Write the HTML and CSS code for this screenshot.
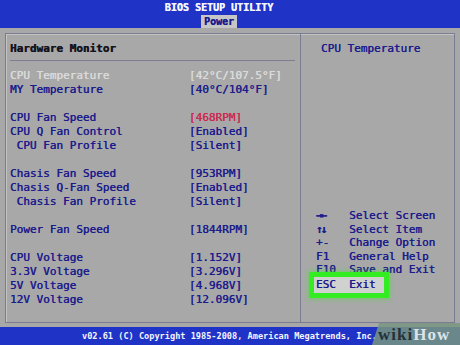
FILE: index.html
```html
<!DOCTYPE html>
<html lang="en">
<head>
    <meta charset="UTF-8">
    <title>BIOS Setup Utility - Power</title>
    <link rel="stylesheet" href="styles.css">
</head>
<body>
    <div class="screen">
        <!-- Barra superior -->
        <header class="topbar">
            <div class="title">BIOS SETUP UTILITY</div>
            <div class="tabs"><span class="tab">Power</span></div>
        </header>

        <!-- Quadro principal -->
        <main class="frame">
            <section class="panel left">
                <h1 class="panel-title">Hardware Monitor</h1>
                <div class="rows">
                    <div class="row disabled"><span>CPU Temperature</span><span>[42°C/107.5°F]</span></div>
                    <div class="row"><span>MY Temperature</span><span>[40°C/104°F]</span></div>
                    <div class="row blank"></div>
                    <div class="row"><span>CPU Fan Speed</span><span class="alert">[468RPM]</span></div>
                    <div class="row"><span>CPU Q Fan Control</span><span>[Enabled]</span></div>
                    <div class="row sub"><span>CPU Fan Profile</span><span>[Silent]</span></div>
                    <div class="row blank"></div>
                    <div class="row"><span>Chasis Fan Speed</span><span>[953RPM]</span></div>
                    <div class="row"><span>Chasis Q-Fan Speed</span><span>[Enabled]</span></div>
                    <div class="row sub"><span>Chasis Fan Profile</span><span>[Silent]</span></div>
                    <div class="row blank"></div>
                    <div class="row"><span>Power Fan Speed</span><span>[1844RPM]</span></div>
                    <div class="row blank"></div>
                    <div class="row"><span>CPU Voltage</span><span>[1.152V]</span></div>
                    <div class="row"><span>3.3V Voltage</span><span>[3.296V]</span></div>
                    <div class="row"><span>5V Voltage</span><span>[4.968V]</span></div>
                    <div class="row"><span>12V Voltage</span><span>[12.096V]</span></div>
                </div>
            </section>

            <aside class="panel right">
                <div class="help-title">CPU Temperature</div>
                <div class="keys">
                    <div class="key"><span class="k arrows">→←</span><span>Select Screen</span></div>
                    <div class="key"><span class="k arrows">↑↓</span><span>Select Item</span></div>
                    <div class="key"><span class="k">+-</span><span>Change Option</span></div>
                    <div class="key"><span class="k">F1</span><span>General Help</span></div>
                    <div class="key"><span class="k">F10</span><span>Save and Exit</span></div>
                    <div class="key"><span class="hl"><span class="k">ESC</span><span>Exit</span></span></div>
                </div>
            </aside>
        </main>

        <!-- Rodapé -->
        <footer class="bottombar">v02.61 (C) Copyright 1985-2008, American Megatrends, Inc.</footer>

        <div class="watermark"><span class="wiki">wiki</span><span class="how">How</span></div>
    </div>
</body>
</html>
```

FILE: styles.css
```css
/* Estilos gerais */
body, html {
    margin: 0;
    padding: 0;
    background-color: #a8a8a8;
}

.screen {
    position: relative;
    width: 460px;
    height: 345px;
    overflow: hidden;
    display: flex;
    flex-direction: column;
    background-color: #a8a8a8;
    font-family: "DejaVu Sans Mono", "Liberation Mono", monospace;
    font-size: 11px;
    color: #1c1c8c;
    text-shadow: 0.3px 0 0 currentColor;
}

/* Barra superior */
.topbar {
    height: 28px;
    background-color: #1f33c6;
    padding-right: 22px;
    display: flex;
    flex-direction: column;
    align-items: center;
}
.title {
    height: 15px;
    line-height: 16px;
    font-size: 10px;
    font-weight: bold;
    color: #f4f4ff;
}
.tabs {
    height: 13px;
}
.tab {
    display: inline-block;
    height: 13px;
    line-height: 13px;
    padding: 0 3px;
    font-size: 10px;
    font-weight: bold;
    background-color: #c6c6c6;
    color: #1c1c8c;
}

/* Quadro principal */
.frame {
    flex: 1;
    margin: 5px 5px 4px 5px;
    display: flex;
    border: 1px solid #7a7c92;
    box-shadow: inset 1px 1px 0 #c4c4c4;
}
.panel {
    display: flex;
    flex-direction: column;
}
.left {
    width: 290px;
    padding-left: 4px;
    border-right: 1px solid #7a7c92;
}
.right {
    flex: 1;
}

.panel-title {
    margin: 0 5px 0 0;
    padding: 8px 0 4px 0;
    font-size: 11px;
    line-height: 14px;
    font-weight: bold;
    color: #141420;
    border-bottom: 1px solid #7c7e90;
}
.rows {
    margin-top: 8px;
}
.row {
    display: grid;
    grid-template-columns: 179px auto;
    height: 14px;
    line-height: 14px;
    white-space: pre;
}
.row.sub span:first-child {
    padding-left: 1ch;
}
.row.disabled {
    color: #dadada;
}
.alert {
    color: #cc2a52;
}

/* Painel de ajuda */
.help-title {
    padding: 8px 0 0 20px;
    line-height: 14px;
    color: #1c1c8c;
}
.keys {
    margin-top: auto;
    padding: 0 0 32px 15px;
}
.key {
    height: 13.5px;
    line-height: 13.5px;
    white-space: pre;
}
.k {
    display: inline-block;
    width: 5ch;
}
.arrows {
    font-weight: bold;
    letter-spacing: -2px;
}
.hl {
    position: relative;
    display: inline-block;
    height: 16px;
    line-height: 15px;
    margin: 0 0 0 -2px;
    padding: 0 8px 0 2px;
    background-color: #d0d2d0;
    box-shadow: 0 0 0 5px #34ec22, 0 0 5px 6px rgba(60, 240, 40, 0.45);
}

/* Rodapé */
.bottombar {
    height: 18px;
    line-height: 19px;
    padding-left: 82px;
    background-color: #1f33c6;
    color: #f4f4ff;
    font-size: 8.6px;
    font-weight: bold;
    white-space: pre;
    text-shadow: none;
}

/* Marca d'água */
.watermark {
    position: absolute;
    right: 0;
    bottom: 0;
    width: 82px;
    height: 22px;
    padding-left: 6px;
    background-color: rgba(120, 150, 128, 0.85);
    clip-path: polygon(7px 0, 100% 0, 100% 100%, 0 100%);
    font-family: "Liberation Serif", "DejaVu Serif", serif;
    font-size: 17px;
    font-weight: bold;
    letter-spacing: 1px;
    line-height: 23px;
    text-shadow: none;
}
.wiki {
    color: #24323a;
}
.how {
    color: #dce4ea;
}
```
